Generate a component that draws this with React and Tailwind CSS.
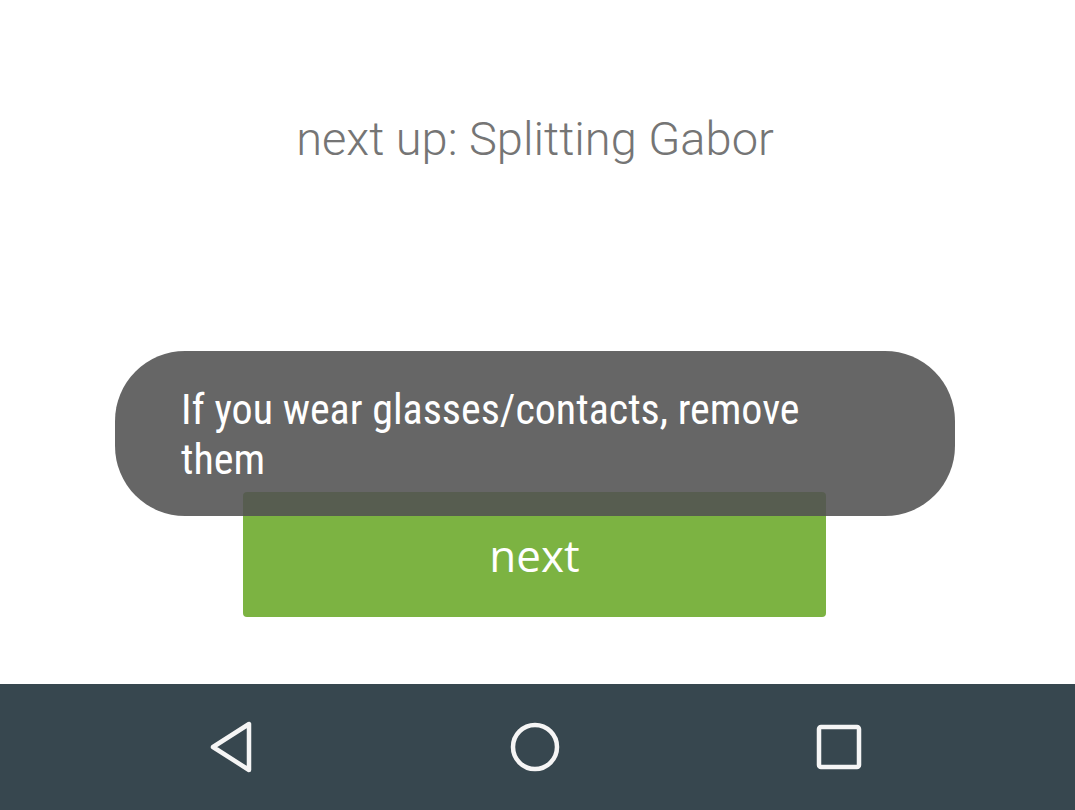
import React from 'react'

function NavBar() {
    return (
        <div className="h-[126px] bg-[#37474f] flex items-center pl-[201px] gap-[244px]">
            {/* Back */}
            <svg width="60" height="60" viewBox="0 0 60 60">
                <path d="M48 7 L48 53 L12 30 Z" fill="none" stroke="#f5f5f5" strokeWidth="4.5" strokeLinejoin="round" />
            </svg>
            {/* Home */}
            <svg width="60" height="60" viewBox="0 0 60 60">
                <circle cx="30" cy="30" r="22" fill="none" stroke="#f5f5f5" strokeWidth="4.5" />
            </svg>
            {/* Recents */}
            <svg width="60" height="60" viewBox="0 0 60 60">
                <rect x="10" y="10" width="40" height="40" rx="2" fill="none" stroke="#f5f5f5" strokeWidth="4.5" />
            </svg>
        </div>
    )
}

export default function App() {
    return (
        <div className="w-[1075px] h-[810px] flex flex-col bg-white overflow-hidden">
            <div className="flex-1 relative flex flex-col items-center">
                {/* Title */}
                <p className="mt-[107px] mr-[5px] text-[47px] leading-[64px] font-light text-[#757575] font-['Roboto',sans-serif]">
                    next up: Splitting Gabor
                </p>

                {/* Next button */}
                <button className="mt-[321px] w-[583px] h-[125px] rounded-[4px] bg-[#7cb342] text-white text-[44px] font-['Open_Sans',sans-serif] ml-[-6px]">
                    next
                </button>

                {/* Toast */}
                <div className="absolute left-[115px] top-[351px] w-[840px] h-[165px] rounded-[70px] bg-[rgba(82,82,82,0.885)] pl-[66px] pt-[34px]">
                    <p className="w-[660px] text-white text-[42px] leading-[50px] font-['Roboto_Condensed','DejaVu_Sans_Condensed',sans-serif]">
                        If you wear glasses/contacts, remove them
                    </p>
                </div>
            </div>
            <NavBar />
        </div>
    )
}
